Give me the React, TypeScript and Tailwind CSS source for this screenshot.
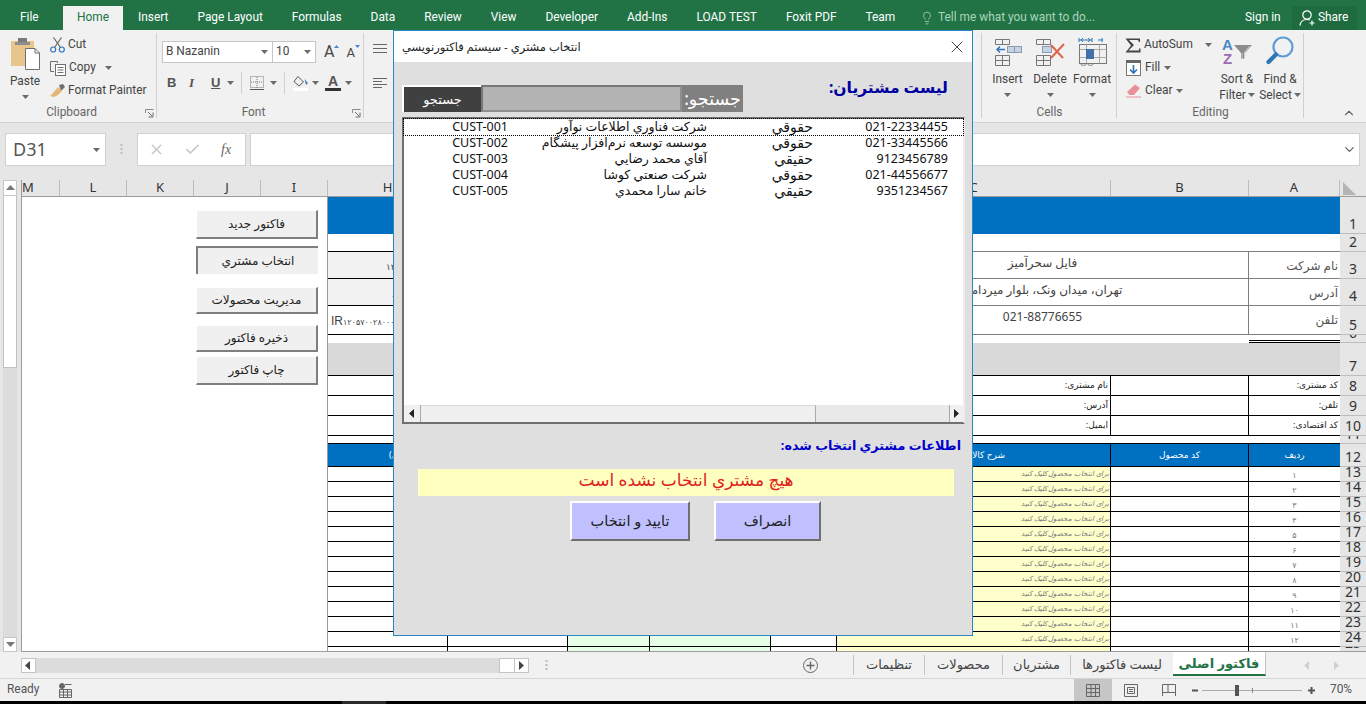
import React from 'react';
import { X, Check, ChevronUp, ChevronDown, Lightbulb } from 'lucide-react';

const Caret = ({ c = '#6a6a6a' }: { c?: string }) => (
  <svg width="7" height="4" viewBox="0 0 7 4" className="shrink-0"><polygon points="0,0 7,0 3.5,4" fill={c} /></svg>
);

const Arrow = ({ dir, c = '#222' }: { dir: 'l' | 'r' | 'u' | 'd'; c?: string }) => {
  const pts = { l: '6,0 6,9 1,4.5', r: '2,0 2,9 7,4.5', u: '0,6 9,6 4.5,1', d: '0,2 9,2 4.5,7' }[dir];
  return <svg width="9" height="9" viewBox="0 0 9 9"><polygon points={pts} fill={c} /></svg>;
};

const Launcher = () => (
  <svg width="9" height="9" viewBox="0 0 9 9" className="absolute right-[3px] bottom-[4px]">
    <path d="M0.5 4V0.5H8.5M0.5 8.5" stroke="#8a8a8a" fill="none" />
    <path d="M3 3L7 7M8 3.5V8H3.5" stroke="#6a6a6a" fill="none" />
  </svg>
);

const Group = ({ w, label, launcher, children }: { w: string; label?: string; launcher?: boolean; children: React.ReactNode }) => (
  <div className={`${w} relative flex flex-col`}>
    <div className="flex-1 min-h-0">{children}</div>
    <div className={`h-[17px] text-center leading-[15px] text-[#666] ${launcher ? 'pr-[14px]' : ''}`}>{label}</div>
    {launcher && <Launcher />}
    <div className="absolute right-0 top-[3px] bottom-[4px] w-px bg-[#d0d0d0]" />
  </div>
);

/* ribbon drawings */
const PasteIcon = () => (
  <svg width="30" height="33" viewBox="0 0 30 33">
    <rect x="1" y="4" width="23" height="25" fill="#e8c58a" />
    <rect x="8" y="1" width="9" height="7" fill="#7a7a7a" />
    <rect x="5" y="5" width="15" height="3" fill="#8d8d8d" />
    <path d="M15.5 11.5H25L29.5 16V32.5H15.5Z" fill="#fff" stroke="#6f6f6f" />
    <path d="M25 11.5V16H29.5" fill="none" stroke="#6f6f6f" />
  </svg>
);
const CutIcon = () => (
  <svg width="15" height="16" viewBox="0 0 15 16" fill="none">
    <path d="M3.5 0.5L10.5 10.5M11.5 0.5L4.5 10.5" stroke="#6b6b6b" strokeWidth="1.3" />
    <circle cx="3.2" cy="12.5" r="2.5" stroke="#2e75b6" strokeWidth="1.2" />
    <circle cx="11.8" cy="12.5" r="2.5" stroke="#2e75b6" strokeWidth="1.2" />
  </svg>
);
const CopyIcon = () => (
  <svg width="16" height="15" viewBox="0 0 16 15" fill="none" stroke="#6f6f6f">
    <path d="M0.5 0.5H7.5V2M0.5 0.5V10.5H4" />
    <rect x="5.5" y="3.5" width="10" height="11" fill="#fff" />
    <path d="M7.5 6.5H13.5M7.5 9H13.5M7.5 11.5H13.5" />
  </svg>
);
const PainterIcon = () => (
  <svg width="16" height="14" viewBox="0 0 16 14">
    <path d="M9 1L13 0L15 3L11 7Z" fill="#6f6f6f" />
    <path d="M8 3L12 7L8 11L4 13L0 12L3 9Z" fill="#e3b874" />
  </svg>
);
const BorderIcon = () => (
  <svg width="14" height="14" viewBox="0 0 14 14" fill="none" stroke="#777" strokeDasharray="1 1">
    <rect x="0.5" y="0.5" width="13" height="11" />
    <path d="M7 1V12M1 6H13" />
    <path d="M0 13.5H14" strokeDasharray="none" stroke="#555" />
  </svg>
);
const FillIcon = () => (
  <svg width="16" height="16" viewBox="0 0 16 16" fill="none">
    <path d="M5 1.5L10.5 7L6 11L1 6.5Z" stroke="#555" />
    <path d="M11.5 4L15 8L13 10Z" fill="#4a7ebb" />
    <rect x="0" y="13" width="15" height="3" fill="#fff" />
  </svg>
);
const Lines = ({ short }: { short?: boolean }) => (
  <svg width="14" height="11" viewBox="0 0 14 11" stroke="#666">
    <path d={short ? 'M0 0.5H14M0 3.5H9M0 6.5H14M0 9.5H9' : 'M0 1.5H14M0 5.5H14M0 9.5H14'} />
  </svg>
);
const InsertIcon = () => (
  <svg width="28" height="28" viewBox="0 0 28 28" fill="none" stroke="#777">
    <path d="M1.5 1.5H15.5V6.5H1.5ZM8.5 1.5V6.5M1.5 17.5H15.5V27.5H1.5ZM8.5 17.5V27.5M1.5 22.5H15.5" />
    <rect x="13.5" y="8.5" width="14" height="6" fill="#c5d3e4" stroke="#8a9ab0" />
    <path d="M20.5 8.5V14.5" stroke="#8a9ab0" />
    <path d="M11 11.5H3M6 8.5L3 11.5L6 14.5" stroke="#2e75b6" strokeWidth="1.4" />
  </svg>
);
const DeleteIcon = () => (
  <svg width="30" height="28" viewBox="0 0 30 28" fill="none" stroke="#777">
    <path d="M1.5 1.5H15.5V6.5H1.5ZM8.5 1.5V6.5M1.5 17.5H15.5V27.5H1.5ZM8.5 17.5V27.5M1.5 22.5H15.5" />
    <rect x="7.5" y="8.5" width="9" height="6" fill="#c5d3e4" stroke="#8a9ab0" />
    <path d="M16 7L28 20M29 6L16 20" stroke="#e0644a" strokeWidth="2" />
  </svg>
);
const FormatIcon = () => (
  <svg width="29" height="29" viewBox="0 0 29 29" fill="none" stroke="#777">
    <path d="M1 3H14M1 1V5M14 1V5M3 3L5 1M3 3L5 5M12 3L10 1M12 3L10 5" stroke="#2e75b6" />
    <path d="M20 3H25M24 1V5" stroke="#2e75b6" />
    <rect x="1.5" y="7.5" width="27" height="19" />
    <path d="M8.5 7.5V26.5M21.5 7.5V26.5M1.5 12.5H28.5M1.5 20.5H28.5" stroke="#aaa" />
    <rect x="8" y="12" width="8" height="10" fill="#4472a8" stroke="none" />
    <path d="M2 26.5C4 29 7 29 9 26.5M9 26.5C11 29 14 29 16 26.5" />
  </svg>
);
const SigmaIcon = () => (
  <svg width="16" height="15" viewBox="0 0 16 15"><path d="M0.5 0.5H15V4H14L13 2H4L9 7L3.5 12.5H14V10.5H15.5V14.5H0.5L6 7.5Z" fill="#444" /></svg>
);
const FillDown = () => (
  <svg width="15" height="16" viewBox="0 0 15 16" fill="none">
    <rect x="0.5" y="0.5" width="14" height="15" fill="#fff" stroke="#777" />
    <rect x="0" y="0" width="15" height="3" fill="#666" />
    <path d="M7.5 5V13M4 9.5L7.5 13L11 9.5" stroke="#2e75b6" strokeWidth="1.6" />
  </svg>
);
const EraserIcon = () => (
  <svg width="15" height="14" viewBox="0 0 15 14">
    <path d="M9 0.5L14 4L8 11H3.5L1 8Z" fill="#e8909a" />
    <path d="M0 13H15" stroke="#e8909a" />
  </svg>
);
const SortIcon = () => (
  <svg width="31" height="30" viewBox="0 0 31 30">
    <text x="0" y="14" fontSize="15" fontWeight="700" fill="#4a86c8" fontFamily="Liberation Sans">A</text>
    <text x="1" y="28" fontSize="15" fontWeight="700" fill="#9b6bb3" fontFamily="Liberation Sans">Z</text>
    <path d="M12 9H30L23 17V23H19V17Z" fill="#8c8c8c" />
    <path d="M20 17V23H22.5V16L28 10" fill="none" stroke="#fff" strokeWidth="0.6" />
  </svg>
);
const FindIcon = () => (
  <svg width="29" height="29" viewBox="0 0 29 29" fill="none">
    <circle cx="17" cy="11" r="9.5" stroke="#5b9bd5" strokeWidth="2.2" />
    <path d="M10 18.5L2.5 26" stroke="#2e75b6" strokeWidth="4.2" strokeLinecap="round" />
  </svg>
);
const ShareIcon = () => (
  <svg width="17" height="16" viewBox="0 0 17 16" fill="none" stroke="#fff" strokeWidth="1.2">
    <circle cx="8" cy="5" r="4.2" />
    <path d="M1 15.5C1.5 11.5 4 9.5 8 9.5C9 9.5 10 9.7 10.8 10" />
    <path d="M13 10.5V15.5M10.5 13H15.5" />
  </svg>
);

const TabLabels = ['Insert', 'Page Layout', 'Formulas', 'Data', 'Review', 'View', 'Developer', 'Add-Ins', 'LOAD TEST', 'Foxit PDF', 'Team'];

const TitleBar = () => (
  <div className="h-[30px] bg-[#217346] flex text-white text-[11.9px] leading-[35px] font-['Roboto',sans-serif]">
    <div className="w-[63px] pl-[20px]">File</div>
    <div className="w-[60px] mt-[6px] h-[24px] bg-[#f1f1f1] text-[#217346] text-center leading-[23px]">Home</div>
    <div className="flex gap-[29px] ml-[15px] w-[781px] whitespace-nowrap">
      {TabLabels.map((t) => <span key={t}>{t}</span>)}
    </div>
    <div className="flex items-center mt-[6px] h-[24px] text-[#a9d3bb] whitespace-nowrap w-[326px] leading-none">
      <Lightbulb size={14} strokeWidth={1.4} className="mr-[4px] ml-px" />
      Tell me what you want to do...
    </div>
    <div className="w-[47px] whitespace-nowrap">Sign in</div>
    <div className="w-[65px] mt-[6px] h-[24px] bg-[#1e6b40] flex items-center leading-none">
      <span className="ml-[7px] mr-[2px]"><ShareIcon /></span>
      Share
    </div>
  </div>
);

const BigBtn = ({ w, icon, label }: { w: string; icon: React.ReactNode; label: string }) => (
  <div className={`${w} flex flex-col items-center pt-[7px]`}>
    <div className="h-[29px] flex items-end">{icon}</div>
    <div className="mt-[5px] leading-[16px]">{label}</div>
    <div className="mt-[6px]"><Caret /></div>
  </div>
);

const Ribbon = () => (
  <div className="h-[93px] flex bg-[#f1f1f1] border-b border-[#d2d2d2] text-[11.9px] text-[#444] font-['Roboto',sans-serif]">
    <Group w="w-[157px]" label="Clipboard" launcher>
      <div className="flex">
        <div className="w-[50px] flex flex-col items-center pt-[7px]">
          <PasteIcon />
          <div className="mt-[3px] leading-[16px]">Paste</div>
          <div className="mt-[6px]"><Caret /></div>
        </div>
        <div className="flex flex-col pt-[6px] gap-[5px]">
          <div className="flex items-center h-[18px] gap-[3px]"><CutIcon /><span>Cut</span></div>
          <div className="flex items-center h-[18px] gap-[3px]"><CopyIcon /><span>Copy</span><span className="ml-[6px]"><Caret /></span></div>
          <div className="flex items-center h-[18px] gap-[2px] whitespace-nowrap"><PainterIcon /><span>Format Painter</span></div>
        </div>
      </div>
    </Group>

    <Group w="w-[207px]" label="Font" launcher>
      <div className="flex items-center pl-[5px] pt-[11px]">
        <div className="w-[111px] h-[22px] bg-white border border-[#c6c6c6] flex items-center justify-between px-[3px] pr-[4px]">
          <span>B Nazanin</span><Caret />
        </div>
        <div className="w-[43px] h-[22px] bg-white border border-[#c6c6c6] border-l-0 flex items-center justify-between px-[3px] pr-[4px]">
          <span>10</span><Caret />
        </div>
        <span className="ml-[8px] text-[16px] leading-none">A</span>
        <span className="mb-[12px]"><svg width="5" height="3"><polygon points="0,3 5,3 2.5,0" fill="#4a86c8" /></svg></span>
        <span className="ml-[7px] text-[13px] leading-none">A</span>
        <span className="mb-[12px]"><svg width="5" height="3"><polygon points="0,0 5,0 2.5,3" fill="#4a86c8" /></svg></span>
      </div>
      <div className="flex items-center h-[24px] mt-[8px] pl-[10px] text-[#555]">
        <span className="font-bold text-[13px] w-[13px] font-['Liberation_Sans',sans-serif]">B</span>
        <span className="italic font-bold text-[13px] ml-[9px] w-[13px] font-['Liberation_Serif',serif]">I</span>
        <span className="font-bold underline text-[13px] ml-[9px] w-[13px] font-['Liberation_Sans',sans-serif]">U</span>
        <span className="ml-[3px]"><Caret /></span>
        <div className="w-px h-[22px] bg-[#d0d0d0] ml-[7px]" />
        <span className="ml-[8px]"><BorderIcon /></span>
        <span className="ml-[6px]"><Caret /></span>
        <div className="w-px h-[22px] bg-[#d0d0d0] ml-[7px]" />
        <span className="ml-[8px]"><FillIcon /></span>
        <span className="ml-[3px]"><Caret /></span>
        <div className="ml-[6px] flex flex-col items-center w-[16px]">
          <span className="font-bold text-[14px] leading-[13px] font-['Liberation_Sans',sans-serif]">A</span>
          <div className="w-[16px] h-[3px] bg-[#333]" />
        </div>
        <span className="ml-[4px]"><Caret /></span>
      </div>
    </Group>

    <Group w="w-[618px]">
      <div className="flex flex-col gap-[24px] pt-[13px] pl-[9px]">
        <Lines />
        <Lines short />
      </div>
    </Group>

    <Group w="w-[135px]" label="Cells">
      <div className="flex justify-start pl-[4px]">
        <BigBtn w="w-[43px]" icon={<InsertIcon />} label="Insert" />
        <BigBtn w="w-[42px]" icon={<DeleteIcon />} label="Delete" />
        <BigBtn w="w-[42px]" icon={<FormatIcon />} label="Format" />
      </div>
    </Group>

    <Group w="w-[187px]" label="Editing">
      <div className="flex">
        <div className="w-[99px] flex flex-col pl-[8px] pt-[6px] gap-[5px]">
          <div className="flex items-center h-[18px] gap-[3px]"><SigmaIcon /><span>AutoSum</span><span className="ml-[9px]"><Caret /></span></div>
          <div className="flex items-center h-[18px] gap-[4px] pl-px"><FillDown /><span>Fill</span><Caret /></div>
          <div className="flex items-center h-[18px] gap-[4px] pl-px"><EraserIcon /><span>Clear</span><Caret /></div>
        </div>
        <div className="w-[42px] flex flex-col items-center pt-[6px] leading-[16px]">
          <div className="h-[29px]"><SortIcon /></div>
          <div className="mt-[6px]">Sort &amp;</div>
          <div className="flex items-center gap-[2px]">Filter<Caret /></div>
        </div>
        <div className="w-[44px] flex flex-col items-center pt-[6px] leading-[16px]">
          <div className="h-[29px]"><FindIcon /></div>
          <div className="mt-[6px]">Find &amp;</div>
          <div className="flex items-center gap-[2px]">Select<Caret /></div>
        </div>
      </div>
    </Group>

    <div className="flex-1 flex items-end justify-end pr-[10px] pb-[2px] text-[#666]"><ChevronUp size={14} /></div>
  </div>
);

const FormulaBar = () => (
  <div className="h-[57px] flex bg-[#e6e6e6] pt-[10px]">
    <div className="ml-[5px] w-[101px] h-[33px] bg-white border border-[#d0d0d0] flex items-center justify-between pl-[7px] pr-[5px] text-[18px] text-[#555]">
      <span>D31</span><Caret />
    </div>
    <div className="w-[31px] h-[33px] flex items-center justify-center">
      <svg width="3" height="12"><path d="M1.5 0V12" stroke="#bbb" strokeWidth="2" strokeDasharray="2 2" /></svg>
    </div>
    <div className="w-[109px] h-[33px] bg-white border border-[#d0d0d0] flex items-center pl-[10px] text-[#c4c4c4]">
      <X size={17} strokeWidth={1.8} />
      <Check size={17} strokeWidth={2.2} className="ml-[19px]" />
      <span className="ml-[20px] text-[#666] italic text-[14px] font-['Liberation_Serif',serif]">fx</span>
    </div>
    <div className="ml-[4px] w-[1110px] h-[33px] bg-white border border-[#d0d0d0] flex items-center justify-end pr-[2px] text-[#666]">
      <ChevronDown size={15} />
    </div>
  </div>
);

const ColHead = ({ w, t, start }: { w: string; t?: string; start?: boolean }) => (
  <div className={`${w} h-full border-r border-[#bdbdbd] text-[13px] leading-[15px] text-[#333] ${start ? 'text-left pl-px' : 'text-center'}`}>{t}</div>
);

const SheetButton = ({ label, cls, sunken }: { label: string; cls: string; sunken?: boolean }) => (
  <div className={`absolute left-[174px] w-[122px] bg-[#f0f0f0] flex items-center justify-center text-[12px] text-[#222] ${cls} ${sunken ? 'border-t-2 border-l-2 border-[#7f7f7f]' : 'border-t border-l border-t-white border-l-white border-b-2 border-r-2 border-b-[#7f7f7f] border-r-[#7f7f7f]'}`}>
    <span dir="rtl">{label}</span>
  </div>
);

const rowGrid = 'grid grid-rows-1 grid-cols-[306px_120px_120px_82px_121px_66px_274px_138px_91px_26px] [&>*]:overflow-hidden';
const blank = 'border-r border-[#9c9c9c] bg-white';
const rowNum = 'bg-[#e6e6e6] border-b border-[#bdbdbd] text-[14px] leading-none text-[#333] text-center flex items-end justify-center';

const Row = ({ h, n, children }: { h: string; n: number; children: React.ReactNode }) => (
  <div className={`${rowGrid} ${h}`}>
    <div className={blank} />
    {children}
    <div className={rowNum}><span className="mb-[2px]">{n}</span></div>
  </div>
);

const headerRows = [
  { n: 3, h: 'h-[27px]', a: 'نام شرکت', m: 'فایل سحرآمیز', hv: <span>۱۲۳۴۵۶</span>, hp: 'pl-[58px] bg-[#f2f2f2]' },
  { n: 4, h: 'h-[27px]', a: 'آدرس', m: 'تهران، میدان ونک، بلوار میرداماد', hv: <span>.</span>, hp: 'pl-[64px] bg-[#f2f2f2]' },
  { n: 5, h: 'h-[29px]', a: 'تلفن', m: '021-88776655', hv: <span className="text-[8px]"><span className="text-[12px] font-['Liberation_Sans',sans-serif]">IR</span>۱۲۰۵۷۰۰۲۸۰۰۰۰۱۰</span>, hp: 'pl-[3px] bg-white' },
];
const custRows = [
  { n: 8, a: 'کد مشتری:', c: 'نام مشتری:' },
  { n: 9, a: 'تلفن:', c: 'آدرس:' },
  { n: 10, a: 'کد اقتصادی:', c: 'ایمیل:' },
];
const itemDigits = ['۱', '۲', '۳', '۴', '۵', '۶', '۷', '۸', '۹', '۱۰', '۱۱', '۱۲'];

const ItemRow = ({ n, h, d, mark }: { n: number; h: string; d?: string; mark?: boolean }) => (
  <Row h={h} n={n}>
    <div className="border-b border-r border-black bg-white text-right text-[8px] leading-[12px] pr-[3px]">{mark ? "'" : ''}</div>
    <div className="border-b border-r border-black bg-white" />
    <div className="border-b border-r border-black bg-[#e6ffe6]" />
    <div className="border-b border-r border-black bg-[#e6ffe6]" />
    <div className="border-b border-r border-black bg-white" />
    <div className="border-b border-r border-black bg-[#ffffcc] text-right text-[7px] leading-[14px] italic text-[#777] pr-[1px] whitespace-nowrap">
      {d && <span dir="rtl">برای انتخاب محصول کلیک کنید</span>}
    </div>
    <div className="border-b border-r border-black bg-white" />
    <div className="border-b border-black bg-white text-center text-[8px] leading-[15px] text-[#777]">{d}</div>
  </Row>
);

const Sheet = () => (
  <div className="h-[472px] flex">
    <div className="w-[21px] bg-[#e6e6e6] flex flex-col pl-[3px] pr-[4px] shrink-0">
      <div className="h-[16px] bg-white border border-[#c8c8c8] flex items-center justify-center"><Arrow dir="u" c="#777" /></div>
      <div className="h-[172px] bg-white border border-[#c0c0c0] border-t-0" />
      <div className="flex-1 bg-[#dcdcdc]" />
      <div className="h-[15px] bg-white border border-[#c8c8c8] flex items-center justify-center"><Arrow dir="d" c="#777" /></div>
    </div>
    <div className="flex-1 relative flex flex-col border-l border-[#9c9c9c] border-b min-w-0 overflow-hidden">
      <div className="h-[16px] flex bg-[#e6e6e6] border-b border-[#9c9c9c] shrink-0 box-content ml-[-1px]">
        <ColHead w="w-[39px]" t="M" start />
        <ColHead w="w-[67px]" t="L" />
        <ColHead w="w-[67px]" t="K" />
        <ColHead w="w-[67px]" t="J" />
        <ColHead w="w-[67px]" t="I" />
        <ColHead w="w-[120px]" t="H" />
        <ColHead w="w-[120px]" t="G" />
        <ColHead w="w-[82px]" t="F" />
        <ColHead w="w-[121px]" t="E" />
        <ColHead w="w-[66px]" t="D" />
        <ColHead w="w-[274px]" t="C" />
        <ColHead w="w-[138px]" t="B" />
        <ColHead w="w-[91px]" t="A" />
        <div className="w-[26px] relative">
          <svg width="14" height="13" className="absolute left-[3px] bottom-[1px]"><polygon points="0,13 13,13 0,0" fill="#b4b4b4" /></svg>
        </div>
      </div>

      <div className="flex flex-col">
        <Row h="h-[37px]" n={1}><div className="col-span-8 bg-[#0070c0]" /></Row>
        <Row h="h-[18px]" n={2}>
          <div className="bg-white border-b border-black" />
          <div className="col-span-7 bg-white border-b border-[#7f7f7f]" />
        </Row>
        {headerRows.map((r) => (
          <Row key={r.n} h={r.h} n={r.n}>
            <div className={`border-b border-black text-[9px] leading-[30px] text-[#444] whitespace-nowrap ${r.hp}`}>{r.hv}</div>
            <div className="col-span-4 bg-white border-b border-[#7f7f7f]" />
            <div className="col-span-2 bg-white border-b border-r border-[#7f7f7f] text-center text-[12px] leading-[22px] text-[#444] whitespace-nowrap">{r.m}</div>
            <div className="bg-white border-b border-[#7f7f7f] text-right text-[12px] leading-[28px] text-[#555] pr-[2px]" dir="rtl">{r.a}</div>
          </Row>
        ))}
        <Row h="h-[8px]" n={6}>
          <div className="col-span-7 bg-white" />
          <div className="bg-white border-b-[3px] border-double border-black" />
        </Row>
        <Row h="h-[33px]" n={7}><div className="col-span-8 bg-[#d9d9d9] border-b border-black" /></Row>
        {custRows.map((r) => (
          <Row key={r.n} h="h-[20px]" n={r.n}>
            <div className="border-b border-black bg-white" />
            <div className="col-span-4 border-b border-black bg-white" />
            <div className="border-b border-r border-black bg-white text-right text-[9px] leading-[18px] text-[#222] pr-[2px]" dir="rtl">{r.c}</div>
            <div className="border-b border-r border-black bg-white" />
            <div className="border-b border-black bg-white text-right text-[9px] leading-[18px] text-[#222] pr-[2px]" dir="rtl">{r.a}</div>
          </Row>
        ))}
        <Row h="h-[8px]" n={11}><div className="col-span-8 bg-white border-b border-black" /></Row>
        <Row h="h-[23px]" n={12}>
          <div className="border-b border-r border-black bg-[#0070c0] text-white text-[9px] leading-[22px] pl-[61px] whitespace-nowrap" dir="ltr">(ریال)</div>
          <div className="col-span-4 border-b border-black bg-[#0070c0]" />
          <div className="border-b border-r border-black bg-[#0070c0] text-white text-[9px] leading-[22px] text-right pr-[105px]" dir="rtl">شرح کالا</div>
          <div className="border-b border-r border-black bg-[#0070c0] text-white text-[9px] leading-[22px] text-center">کد محصول</div>
          <div className="border-b border-black bg-[#0070c0] text-white text-[9px] leading-[22px] text-center">ردیف</div>
        </Row>
        {itemDigits.map((d, i) => (
          <ItemRow key={d} n={13 + i} h="h-[15px]" d={d} mark={i === 11} />
        ))}
        <ItemRow n={25} h="h-[6px]" />
      </div>

      {/* floating shapes on the worksheet */}
      <SheetButton label="فاکتور جدید" cls="top-[30px] h-[29px]" />
      <SheetButton label="انتخاب مشتري" cls="top-[66px] h-[28px]" sunken />
      <SheetButton label="مدیریت محصولات" cls="top-[107px] h-[27px]" />
      <SheetButton label="ذخیره فاکتور" cls="top-[145px] h-[27px]" />
      <SheetButton label="چاپ فاکتور" cls="top-[176px] h-[29px]" />
    </div>
  </div>
);

const TabRow = ({ w, t }: { w: string; t: string }) => (
  <div className={`${w} h-[20px] self-center border-l border-[#c4c4c4] text-center text-[13px] leading-[18px] text-[#444]`} dir="rtl">{t}</div>
);

const SheetTabs = () => (
  <div className="h-[27px] flex bg-[#f1f1f1] border-b border-[#d5d5d5] shrink-0">
    <div className="ml-[21px] mt-[6px] w-[15px] h-[15px] bg-white border border-[#c4c4c4] flex items-center justify-center"><Arrow dir="l" c="#444" /></div>
    <div className="mt-[6px] w-[463px] h-[15px] bg-[#dcdcdc]" />
    <div className="mt-[6px] w-[16px] h-[15px] bg-white border border-[#c4c4c4]" />
    <div className="mt-[6px] w-[14px] h-[15px] bg-white border border-[#c4c4c4] border-l-0 flex items-center justify-center"><Arrow dir="r" c="#444" /></div>
    <div className="w-[274px] flex">
      <div className="ml-[16px] mt-[8px]"><svg width="3" height="12"><path d="M1.5 0V12" stroke="#bbb" strokeWidth="2" strokeDasharray="2 2" /></svg></div>
    </div>
    <div className="w-[50px] flex items-center">
      <svg width="15" height="15" viewBox="0 0 15 15" fill="none" stroke="#666"><circle cx="7.5" cy="7.5" r="7" /><path d="M7.5 3.5V11.5M3.5 7.5H11.5" strokeWidth="1.4" /></svg>
    </div>
    <TabRow w="w-[71px]" t="تنظیمات" />
    <TabRow w="w-[78px]" t="محصولات" />
    <TabRow w="w-[68px]" t="مشتریان" />
    <TabRow w="w-[103px]" t="لیست فاکتورها" />
    <div className="w-[93px] h-[24px] bg-white border-b-2 border-[#217346] border-r border-r-[#c4c4c4] text-center text-[13px] leading-[22px] font-bold text-[#217346]" dir="rtl">فاکتور اصلی</div>
    <div className="flex-1 flex items-center gap-[20px] pl-[37px]">
      <Arrow dir="l" c="#d0d0d0" />
      <Arrow dir="r" c="#d0d0d0" />
    </div>
  </div>
);

const StatusBar = () => (
  <div className="h-[22px] flex items-center bg-[#f1f1f1] text-[11.9px] text-[#555] shrink-0 font-['Roboto',sans-serif]">
    <span className="ml-[7px]">Ready</span>
    <svg width="13" height="15" viewBox="0 0 13 15" className="ml-[20px]" fill="none" stroke="#666">
      <circle cx="3" cy="3" r="2.5" fill="#666" /><path d="M6 1.5H12.5M0.5 6.5H12.5V14.5H0.5ZM0.5 9H12.5M0.5 12H12.5M4.5 6.5V14.5M8.5 6.5V14.5" />
    </svg>
    <div className="ml-auto flex h-full items-center">
      <div className="w-[38px] h-full bg-[#c6c6c6] flex items-center justify-center">
        <svg width="14" height="13" fill="none" stroke="#666"><path d="M0.5 0.5H13.5V12.5H0.5ZM5 0.5V12.5M9.5 0.5V12.5M0.5 4.5H13.5M0.5 8.5H13.5" /></svg>
      </div>
      <div className="w-[38px] flex justify-center">
        <svg width="14" height="13" fill="none" stroke="#666"><path d="M0.5 0.5H13.5V12.5H0.5ZM3.5 3.5H10.5V9.5H3.5ZM5 5.5H9M5 7.5H9" /></svg>
      </div>
      <div className="w-[38px] flex justify-center">
        <svg width="14" height="13" fill="none" stroke="#666"><path d="M0.5 12V0.5H13.5V12M0.5 8.5H13.5M6 0.5V8.5" /></svg>
      </div>
      <svg width="124" height="11" viewBox="0 0 124 11" className="ml-[3px]">
        <path d="M1 5.5H7M117 5.5H124M120.5 2V9" stroke="#555" strokeWidth="2" />
        <path d="M11 5.5H111" stroke="#aaa" />
        <rect x="44" y="0" width="4" height="11" fill="#555" />
        <path d="M61.5 3V8" stroke="#888" />
      </svg>
      <span className="w-[51px] pl-[15px]">70%</span>
    </div>
  </div>
);

const customers = [
  { code: 'CUST-001', name: 'شرکت فناوري اطلاعات نوآور', type: 'حقوقي', phone: '021-22334455' },
  { code: 'CUST-002', name: 'موسسه توسعه نرم‌افزار پيشگام', type: 'حقوقي', phone: '021-33445566' },
  { code: 'CUST-003', name: 'آقاي محمد رضايي', type: 'حقيقي', phone: '9123456789' },
  { code: 'CUST-004', name: 'شرکت صنعتي کوشا', type: 'حقوقي', phone: '021-44556677' },
  { code: 'CUST-005', name: 'خانم سارا محمدي', type: 'حقيقي', phone: '9351234567' },
];

const raised = 'border-2 border-t-white border-l-white border-b-[#6f6f6f] border-r-[#6f6f6f]';

const Dialog = () => (
  <div className="absolute left-[393px] top-[30px] w-[580px] h-[606px] border border-[#2a86c4] flex flex-col">
    <div className="h-[31px] bg-white flex items-center justify-between pl-[8px] pr-[5px] text-[11.5px] text-[#222] shrink-0">
      <span dir="rtl">انتخاب مشتري - سيستم فاکتورنويسي</span>
      <X size={20} strokeWidth={1} />
    </div>
    <div className="flex-1 bg-[#dfdfdf] pl-[8px] flex flex-col">
      <div className="flex h-[50px]">
        <div className="mt-[23px] h-[27px] flex">
          <div className="w-[79px] bg-[#404040] border-t-2 border-l-2 border-white text-white text-[13px] leading-[24px] text-center" dir="rtl">جستجو</div>
          <div className="w-[201px] bg-[#b3b3b3] border-2 border-t-[#777] border-l-[#777] border-b-[#8f8f8f] border-r-[#8f8f8f]" />
          <div className="w-[61px] bg-[#808080] text-white text-[17.5px] leading-[26px] text-center" dir="rtl">جستجو:</div>
        </div>
        <div className="ml-[86px] mt-[12px] text-[15.5px] leading-[26px] font-bold text-[#0000a0]" dir="rtl">ليست مشتريان:</div>
      </div>

      <div className="mt-[5px] w-[563px] h-[307px] bg-white border-2 border-t-[#707070] border-l-[#707070] border-b-[#707070] border-r-[#ececec] flex flex-col text-[#111]">
        <div className="flex-1 text-[12.5px] leading-[16px]">
          {customers.map((c, i) => (
            <div key={c.code} className={`grid grid-cols-[104px_199px_106px_135px] h-[16px] whitespace-nowrap ${i === 0 ? 'outline-1 outline-dotted outline-black' : ''}`}>
              <span className="text-right">{c.code}</span>
              <span className="text-right" dir="rtl">{c.name}</span>
              <span className="text-right text-[14px]" dir="rtl">{c.type}</span>
              <span className="text-right">{c.phone}</span>
            </div>
          ))}
        </div>
        <div className="h-[17px] flex">
          <div className="w-[17px] bg-[#f0f0f0] border-r border-[#aaa] flex items-center justify-center"><Arrow dir="l" /></div>
          <div className="w-[395px] bg-[#f0f0f0] border-r border-[#aaa] border-t border-t-[#d8d8d8]" />
          <div className="w-[133px] bg-[#e9e9e9]" />
          <div className="flex-1 bg-[#f0f0f0] border-l border-[#aaa] flex items-center justify-center"><Arrow dir="r" /></div>
        </div>
      </div>

      <div className="mt-[12px] pr-[11px] text-[12.75px] leading-[18px] font-bold text-[#0000cc] text-right" dir="rtl">اطلاعات مشتري انتخاب شده:</div>
      <div className="mt-[15px] ml-[16px] w-[536px] h-[27px] bg-[#ffffc0] text-[#e01e1e] text-[17px] leading-[22px] text-center" dir="rtl">هيچ مشتري انتخاب نشده است</div>
      <div className="mt-[5px] flex ml-[168px] gap-[24px] text-[14.5px] text-[#222]">
        <div className={`w-[120px] h-[40px] bg-[#c0c0ff] flex items-center justify-center ${raised}`} dir="rtl">تاييد و انتخاب</div>
        <div className={`w-[107px] h-[40px] bg-[#c0c0ff] flex items-center justify-center ${raised}`} dir="rtl">انصراف</div>
      </div>
    </div>
  </div>
);

export default function App() {
  return (
    <div className="relative w-[1366px] h-[704px] overflow-hidden bg-[#f1f1f1] font-['Noto_Sans','DejaVu_Sans',sans-serif]">
      <TitleBar />
      <Ribbon />
      <FormulaBar />
      <Sheet />
      <SheetTabs />
      <StatusBar />
      <div className="h-[3px] bg-black flex"><div className="ml-[342px] w-[44px] bg-[#2b2b2b]" /></div>
      <Dialog />
    </div>
  );
}
